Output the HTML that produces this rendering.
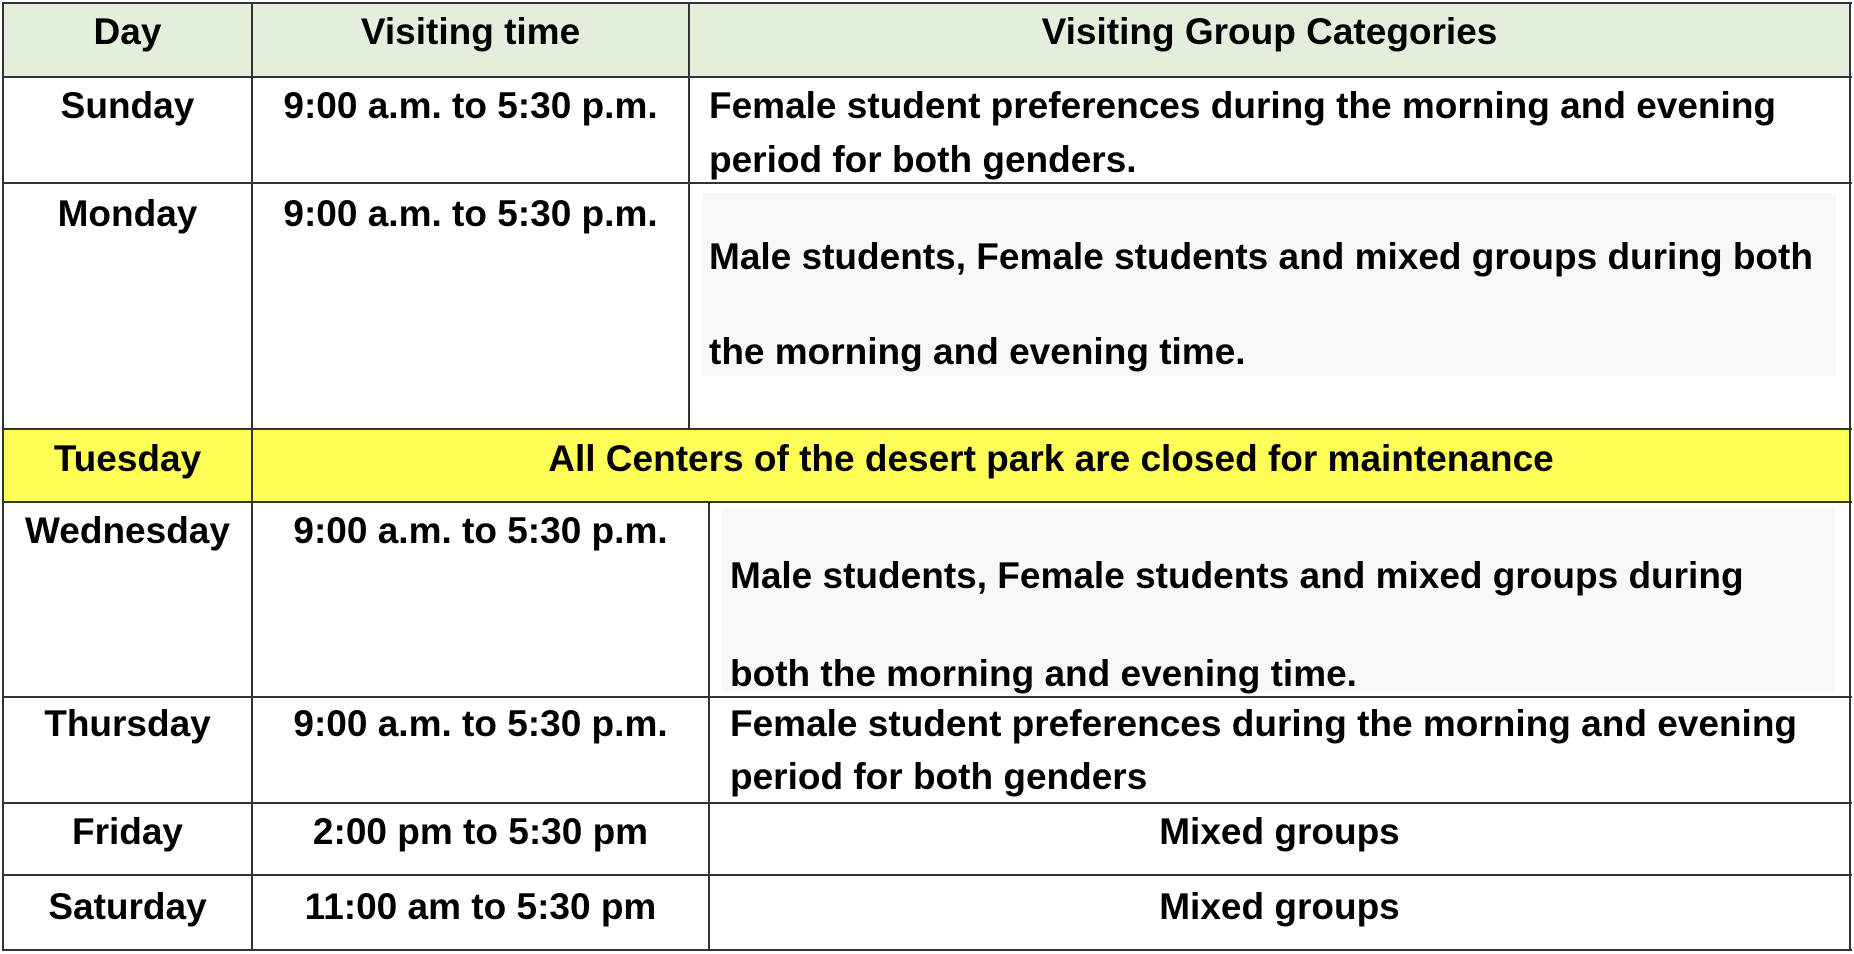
<!DOCTYPE html>
<html><head><meta charset="utf-8"><style>
html,body{margin:0;padding:0;background:#fff;}
body{width:1854px;height:954px;position:relative;overflow:hidden;font-family:"Liberation Sans",sans-serif;font-weight:bold;color:#000;}
.b{position:absolute;background:#333;}
.t{position:absolute;font-size:37px;line-height:44px;white-space:nowrap;letter-spacing:0px;}
.c{text-align:center;}
.bg{position:absolute;}
</style></head><body>
<div class="bg" style="left:3px;top:3px;width:1847px;height:74px;background:#e3eedb"></div>
<div class="bg" style="left:3px;top:429px;width:1847px;height:73px;background:#ffff57"></div>
<div class="bg" style="left:702px;top:193px;width:1134px;height:183px;background:#f7f8fa"></div>
<div class="bg" style="left:721px;top:508px;width:1114px;height:184px;background:#f7f8fa"></div>

<div class="b" style="left:2px;top:2px;width:1850px;height:2px"></div>
<div class="b" style="left:2px;top:76px;width:1850px;height:2px"></div>
<div class="b" style="left:2px;top:182px;width:1850px;height:2px"></div>
<div class="b" style="left:2px;top:428px;width:1850px;height:2px"></div>
<div class="b" style="left:2px;top:501px;width:1850px;height:2px"></div>
<div class="b" style="left:2px;top:696px;width:1850px;height:2px"></div>
<div class="b" style="left:2px;top:802px;width:1850px;height:2px"></div>
<div class="b" style="left:2px;top:874px;width:1850px;height:2px"></div>
<div class="b" style="left:2px;top:949px;width:1850px;height:2px"></div>
<div class="b" style="left:2px;top:2px;width:2px;height:949px"></div>
<div class="b" style="left:1849px;top:2px;width:2px;height:949px"></div>
<div class="b" style="left:251px;top:2px;width:2px;height:949px"></div>
<div class="b" style="left:688px;top:2px;width:2px;height:428px"></div>
<div class="b" style="left:708px;top:501px;width:2px;height:450px"></div>

<div class="t c" style="left:3px;width:249px;top:10px">Day</div>
<div class="t c" style="left:252px;width:437px;top:10px">Visiting time</div>
<div class="t c" style="left:689px;width:1161px;top:10px">Visiting Group Categories</div>

<div class="t c" style="left:3px;width:249px;top:84px">Sunday</div>
<div class="t c" style="left:252px;width:437px;top:84px">9:00 a.m. to 5:30 p.m.</div>
<div class="t" style="left:709px;top:84px">Female student preferences during the morning and evening</div>
<div class="t" style="left:709px;top:138px">period for both genders.</div>

<div class="t c" style="left:3px;width:249px;top:192px">Monday</div>
<div class="t c" style="left:252px;width:437px;top:192px">9:00 a.m. to 5:30 p.m.</div>
<div class="t" style="left:709px;top:235px">Male students, Female students and mixed groups during both</div>
<div class="t" style="left:709px;top:330px">the morning and evening time.</div>

<div class="t c" style="left:3px;width:249px;top:437px">Tuesday</div>
<div class="t c" style="left:252px;width:1598px;top:437px">All Centers of the desert park are closed for maintenance</div>

<div class="t c" style="left:3px;width:249px;top:509px">Wednesday</div>
<div class="t c" style="left:252px;width:457px;top:509px">9:00 a.m. to 5:30 p.m.</div>
<div class="t" style="left:730px;top:554px">Male students, Female students and mixed groups during</div>
<div class="t" style="left:730px;top:652px">both the morning and evening time.</div>

<div class="t c" style="left:3px;width:249px;top:702px">Thursday</div>
<div class="t c" style="left:252px;width:457px;top:702px">9:00 a.m. to 5:30 p.m.</div>
<div class="t" style="left:730px;top:702px">Female student preferences during the morning and evening</div>
<div class="t" style="left:730px;top:755px">period for both genders</div>

<div class="t c" style="left:3px;width:249px;top:810px">Friday</div>
<div class="t c" style="left:252px;width:457px;top:810px">2:00 pm to 5:30 pm</div>
<div class="t c" style="left:709px;width:1141px;top:810px">Mixed groups</div>

<div class="t c" style="left:3px;width:249px;top:885px">Saturday</div>
<div class="t c" style="left:252px;width:457px;top:885px">11:00 am to 5:30 pm</div>
<div class="t c" style="left:709px;width:1141px;top:885px">Mixed groups</div>
</body></html>
